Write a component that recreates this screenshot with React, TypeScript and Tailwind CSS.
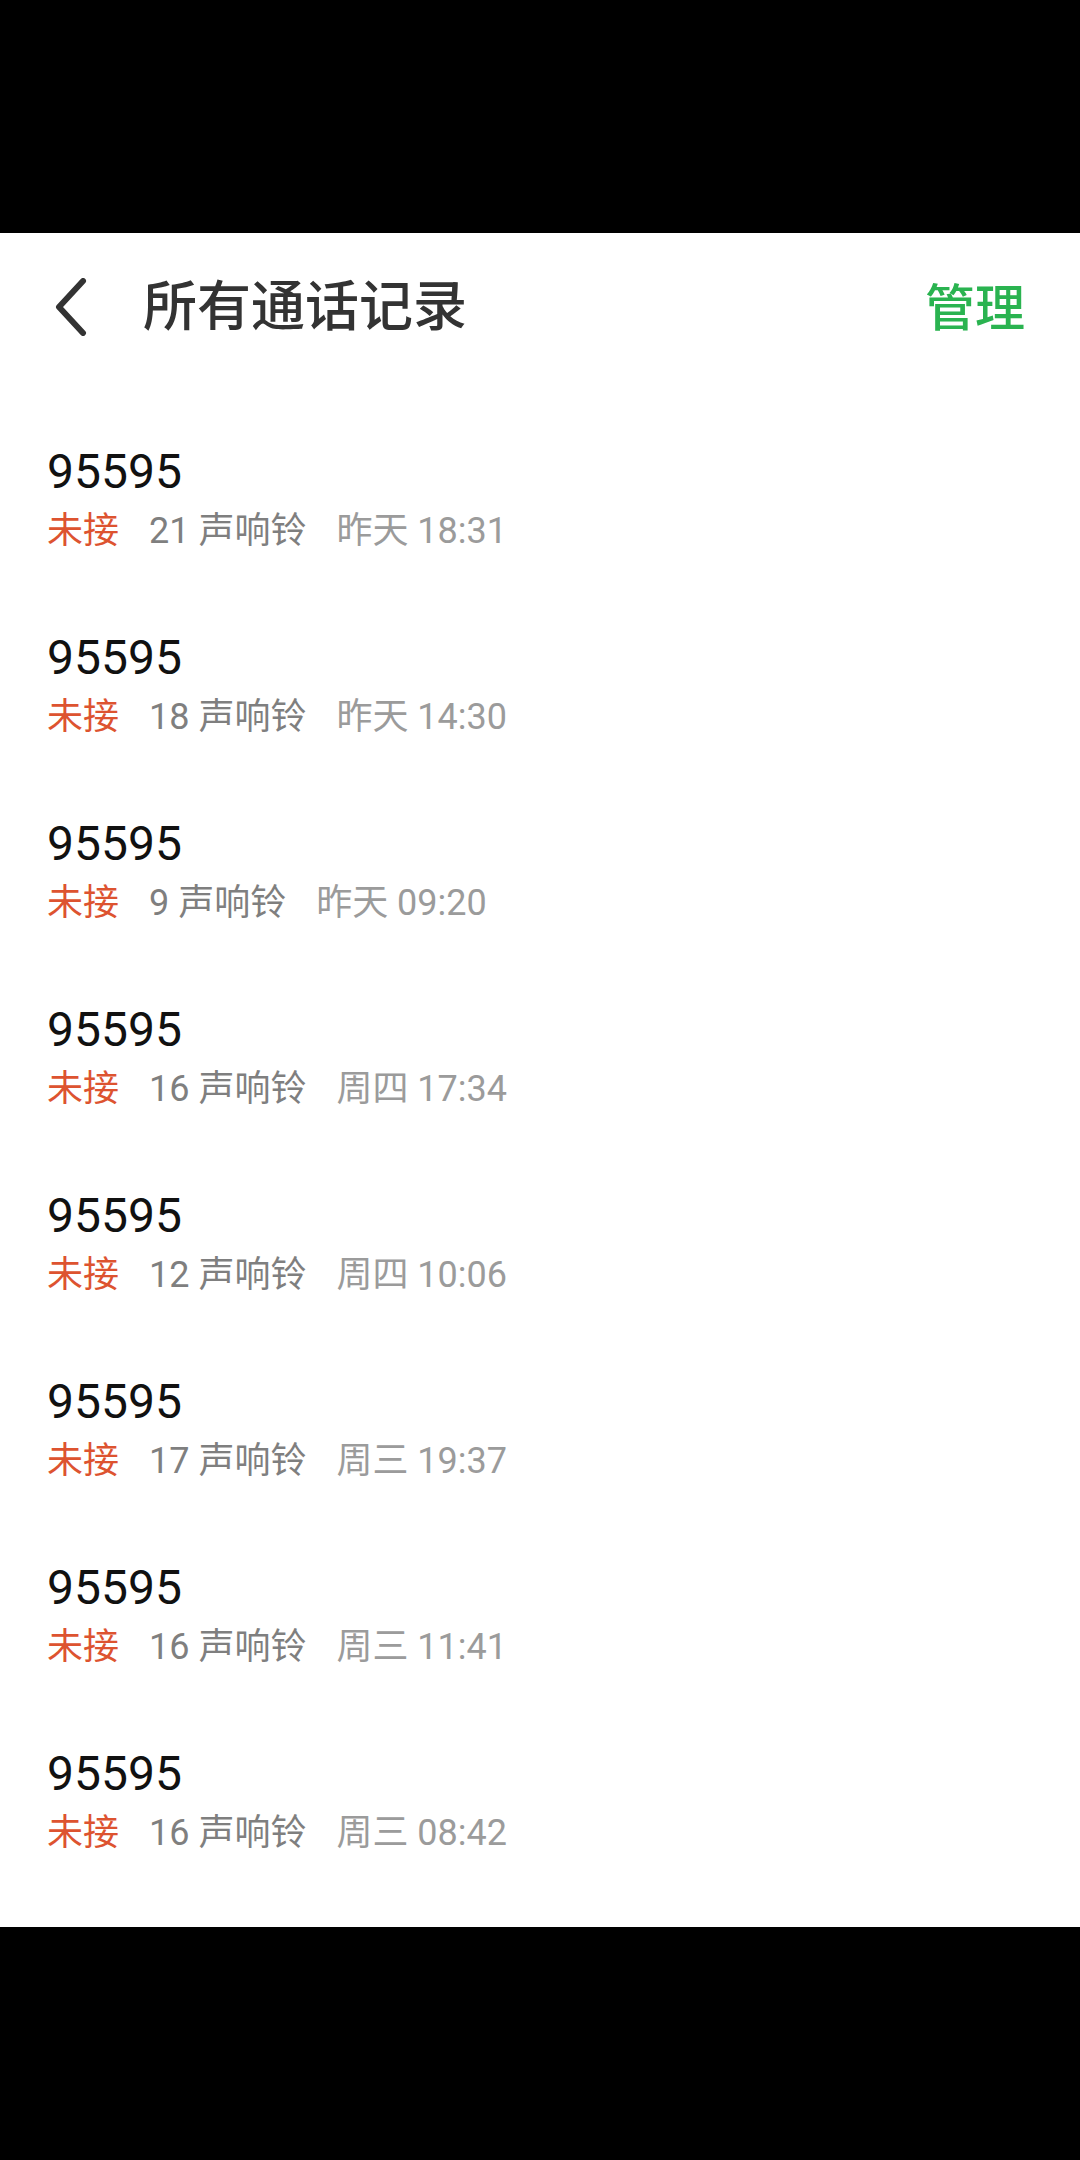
import React from "react";

const rows = [
  { rings: "21", when: "昨天 18:31" },
  { rings: "18", when: "昨天 14:30" },
  { rings: "9", when: "昨天 09:20" },
  { rings: "16", when: "周四 17:34" },
  { rings: "12", when: "周四 10:06" },
  { rings: "17", when: "周三 19:37" },
  { rings: "16", when: "周三 11:41" },
  { rings: "16", when: "周三 08:42" },
];

const font = { fontFamily: 'Roboto, "Noto Sans CJK SC", sans-serif' };

export default function App() {
  return (
    <div className="w-[1080px] h-[2160px] bg-black flex flex-col" style={font}>
      <div className="h-[233px] bg-black" />
      <div className="h-[1694px] bg-white flex flex-col">
        <div className="h-[148px] flex items-center px-[55px]">
          <svg width="32" height="58" viewBox="0 0 32 58" className="shrink-0">
            <path d="M28 3 L4 29 L28 55" fill="none" stroke="#333333" strokeWidth="6" strokeLinecap="round" strokeLinejoin="round" />
          </svg>
          <div className="ml-[56px] mb-[8px] text-[54px] leading-none font-medium text-[#333333]" style={{ fontFamily: '"Noto Sans CJK SC", sans-serif' }}>
            所有通话记录
          </div>
          <div className="ml-auto mb-[6px] text-[50px] leading-none font-medium text-[#2ab350]" style={{ fontFamily: '"Noto Sans CJK SC", sans-serif' }}>
            管理
          </div>
        </div>
        <div className="flex flex-col">
          {rows.map((r, i) => (
            <div key={i} className="h-[186px] px-[47px] pt-[63px] flex flex-col">
              <div className="text-[48px] leading-[56px] text-[#111111]">95595</div>
              <div className="mt-[9px] flex items-center gap-[30px] text-[36px] leading-[44px]">
                <span className="text-[#dd5330]">未接</span>
                <span className="text-[#7f7f7f]">{r.rings} 声响铃</span>
                <span className="text-[#9b9b9b]">{r.when}</span>
              </div>
            </div>
          ))}
        </div>
      </div>
      <div className="flex-1 bg-black" />
    </div>
  );
}
